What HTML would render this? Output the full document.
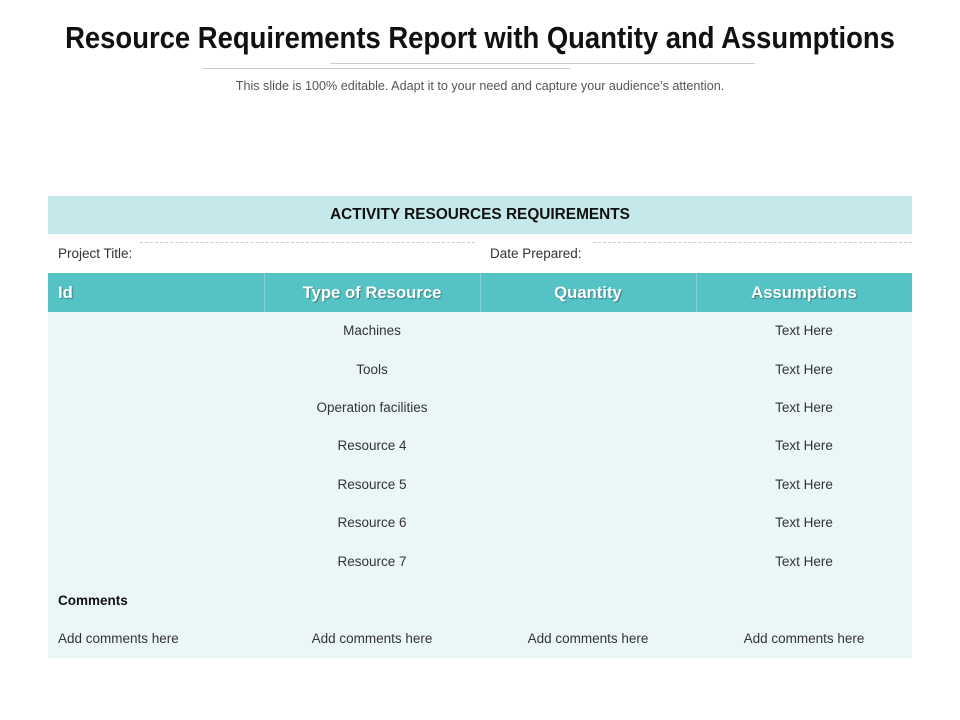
<!DOCTYPE html>
<html><head><meta charset="utf-8"><style>
body{margin:0;width:960px;height:720px;background:#fff;position:relative;font-family:"Liberation Sans",sans-serif;overflow:hidden}
.a{position:absolute}
h1{position:absolute;top:20px;left:0;width:960px;text-align:center;margin:0;font-size:31px;font-weight:bold;color:#111;transform:scaleX(0.885);transform-origin:480px 0;white-space:nowrap}
.sub{top:79px;left:0;width:960px;text-align:center;font-size:12.6px;color:#555}
.c{position:absolute;text-align:center;font-size:13.5px;color:#333;width:216px}
.h{position:absolute;color:#fff;font-weight:bold;font-size:16.7px;text-shadow:1px 1px 1px rgba(0,0,0,.35);top:283px}
</style></head><body>
<h1>Resource Requirements Report with Quantity and Assumptions</h1>
<div class="a" style="left:330px;top:63px;width:425px;height:1px;background:#ccc"></div>
<div class="a" style="left:203px;top:68px;width:367px;height:1px;background:#ccc"></div>
<div class="a sub">This slide is 100% editable. Adapt it to your need and capture your audience’s attention.</div>

<div class="a" style="left:48px;top:196px;width:864px;height:38px;background:#c5e9ea"></div>
<div class="a" style="left:48px;top:206px;width:864px;text-align:center;font-weight:bold;font-size:15.4px;color:#111">ACTIVITY RESOURCES REQUIREMENTS</div>
<div class="a" style="left:58px;top:246px;font-size:13.5px;color:#333">Project Title:</div>
<div class="a" style="left:490px;top:246px;font-size:13.5px;color:#333">Date Prepared:</div>
<div class="a" style="left:140px;top:242px;width:335px;border-top:1px dashed #ccc"></div>
<div class="a" style="left:593px;top:242px;width:319px;border-top:1px dashed #ccc"></div>

<div class="a" style="left:48px;top:273px;width:864px;height:39px;background:#55c3c6"></div>
<div class="a" style="left:264px;top:273px;width:1px;height:39px;background:#7fd3d5"></div>
<div class="a" style="left:480px;top:273px;width:1px;height:39px;background:#7fd3d5"></div>
<div class="a" style="left:696px;top:273px;width:1px;height:39px;background:#7fd3d5"></div>
<div class="h" style="left:58px">Id</div>
<div class="h" style="left:264px;width:216px;text-align:center">Type of Resource</div>
<div class="h" style="left:480px;width:216px;text-align:center">Quantity</div>
<div class="h" style="left:696px;width:216px;text-align:center">Assumptions</div>

<div class="a" style="left:48px;top:312px;width:864px;height:346px;background:#ebf7f7"></div>
<div class="c" style="left:264px;top:323px">Machines</div><div class="c" style="left:696px;top:323px">Text Here</div>
<div class="c" style="left:264px;top:362px">Tools</div><div class="c" style="left:696px;top:362px">Text Here</div>
<div class="c" style="left:264px;top:400px">Operation facilities</div><div class="c" style="left:696px;top:400px">Text Here</div>
<div class="c" style="left:264px;top:438px">Resource 4</div><div class="c" style="left:696px;top:438px">Text Here</div>
<div class="c" style="left:264px;top:477px">Resource 5</div><div class="c" style="left:696px;top:477px">Text Here</div>
<div class="c" style="left:264px;top:515px">Resource 6</div><div class="c" style="left:696px;top:515px">Text Here</div>
<div class="c" style="left:264px;top:554px">Resource 7</div><div class="c" style="left:696px;top:554px">Text Here</div>
<div class="a" style="left:58px;top:593px;font-size:13.5px;font-weight:bold;color:#111">Comments</div>
<div class="a" style="left:58px;top:631px;font-size:13.5px;color:#333">Add comments here</div>
<div class="c" style="left:264px;top:631px">Add comments here</div>
<div class="c" style="left:480px;top:631px">Add comments here</div>
<div class="c" style="left:696px;top:631px">Add comments here</div>
</body></html>
